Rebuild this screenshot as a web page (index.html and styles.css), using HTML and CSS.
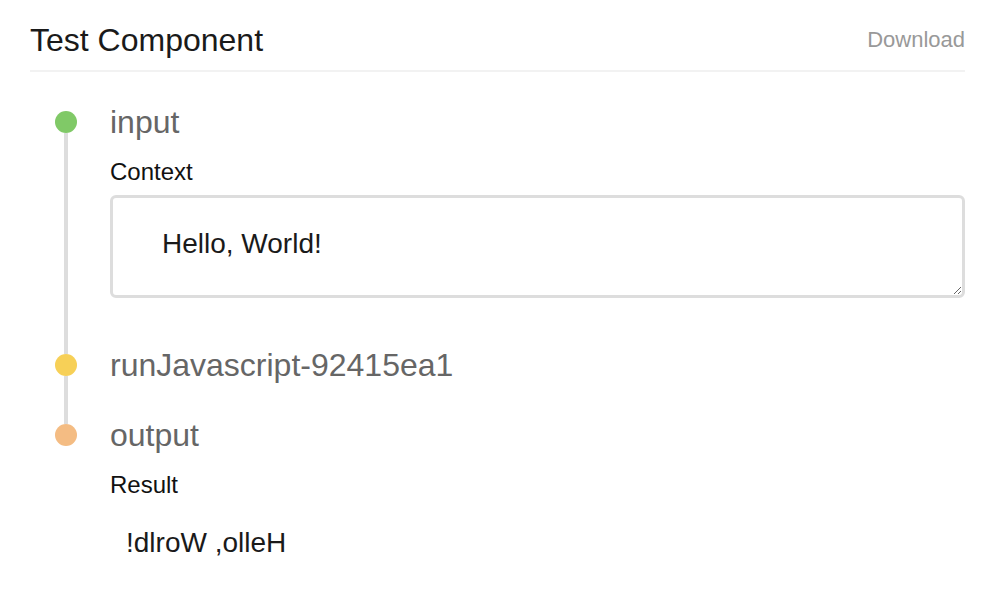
FILE: index.html
```html
<!DOCTYPE html>
<html lang="en">
<head>
<meta charset="utf-8">
<title>Test Component</title>
<link rel="stylesheet" href="styles.css">
</head>
<body>
<div class="page">
  <header class="header">
    <h1 class="title">Test Component</h1>
    <a class="download" href="#">Download</a>
  </header>
  <ol class="timeline">
    <li class="step step-input">
      <div class="rail"><span class="dot"></span></div>
      <div class="content">
        <div class="step-name">input</div>
        <label class="field-label" for="ctx">Context</label>
        <textarea id="ctx" class="field-input">Hello, World!</textarea>
      </div>
    </li>
    <li class="step step-run">
      <div class="rail"><span class="dot"></span></div>
      <div class="content">
        <div class="step-name">runJavascript-92415ea1</div>
      </div>
    </li>
    <li class="step step-output">
      <div class="rail"><span class="dot"></span></div>
      <div class="content">
        <div class="step-name">output</div>
        <div class="field-label">Result</div>
        <div class="field-value">!dlroW ,olleH</div>
      </div>
    </li>
  </ol>
</div>
</body>
</html>
```

FILE: styles.css
```css
* { box-sizing: border-box; }

html, body {
  margin: 0;
  padding: 0;
  background: #ffffff;
}

body {
  font-family: "Liberation Sans", Arial, Helvetica, sans-serif;
  color: #1a1a1a;
}

.page {
  padding: 0 31px 0 30px;
}

.header {
  display: flex;
  justify-content: space-between;
  align-items: center;
  padding: 20px 0 10px;
  border-bottom: 2px solid #f2f2f2;
}

.title {
  margin: 0;
  font-size: 32px;
  font-weight: normal;
  line-height: 40px;
  color: #1a1a1a;
}

.download {
  font-size: 22px;
  line-height: 40px;
  color: #999999;
  text-decoration: none;
}

.timeline {
  list-style: none;
  margin: 28px 0 0;
  padding: 0;
}

.step {
  display: flex;
}

.rail {
  width: 22px;
  margin: 0 33px 0 25px;
  display: flex;
  flex-direction: column;
  align-items: center;
}

.rail::before {
  content: "";
  display: block;
  width: 4px;
  height: 11px;
  background: #dddddd;
}

.rail::after {
  content: "";
  display: block;
  width: 4px;
  flex: 1;
  background: #dddddd;
}

.step:first-child .rail::before { background: transparent; }
.step:last-child .rail::after { background: transparent; }

.dot {
  display: block;
  width: 22px;
  height: 22px;
  border-radius: 50%;
  flex: none;
}

.step-input .dot { background: #80c967; }
.step-run .dot { background: #f7d057; }
.step-output .dot { background: #f4bc83; }

.content {
  flex: 1;
  display: flex;
  flex-direction: column;
  align-items: flex-start;
}

.step-input .content { padding-bottom: 45px; }
.step-run .content { padding-bottom: 26px; }

.step-name {
  font-size: 32px;
  line-height: 44px;
  color: #666666;
}

.field-label {
  margin-top: 13px;
  font-size: 24px;
  line-height: 30px;
  color: #111111;
}

.field-input {
  display: block;
  margin-top: 8px;
  width: 100%;
  height: 103px;
  border: 3px solid #dddddd;
  border-radius: 6px;
  padding: 28px 16px 0 49px;
  font-family: "Liberation Sans", Arial, Helvetica, sans-serif;
  font-size: 28px;
  line-height: 36px;
  color: #1a1a1a;
  background: #ffffff;
  outline: none;
}

.field-value {
  margin-top: 25px;
  padding-left: 16px;
  font-size: 28px;
  line-height: 36px;
  color: #1a1a1a;
}
```
